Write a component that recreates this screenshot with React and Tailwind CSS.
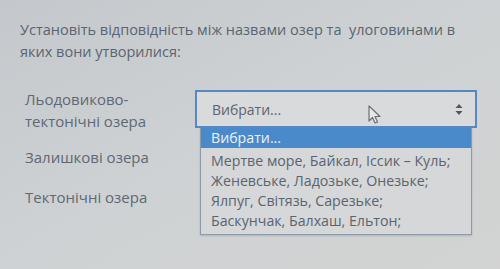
const rows = [
  { label: ['Льодовиково-', 'тектонічні озера'], h: 'h-[58px]' },
  { label: ['Залишкові озера'], h: 'h-[40px]' },
  { label: ['Тектонічні озера'], h: 'h-[40px]' },
];

const options = [
  'Мертве море, Байкал, Іссик – Куль;',
  'Женевське, Ладозьке, Онезьке;',
  'Ялпуг, Світязь, Сарезьке;',
  'Баскунчак, Балхаш, Ельтон;',
];

function Cursor() {
  return (
    <svg width="14" height="20" viewBox="0 0 14 20" className="absolute left-[171px] top-[13px]">
      <path d="M1 1 L1 16 L4.5 12.5 L7 18 L9.5 17 L7 11.5 L12 11.5 Z" fill="#e8e8e8" stroke="#6a6f76" strokeWidth="1.2" strokeLinejoin="round" />
    </svg>
  );
}

function Arrows() {
  return (
    <svg width="8" height="11" viewBox="0 0 8 11" className="ml-auto">
      <path d="M4 0 L7.5 4 L0.5 4 Z M4 11 L7.5 7 L0.5 7 Z" fill="#4f5660" />
    </svg>
  );
}

export default function App() {
  return (
    <div className="w-[500px] h-[269px] overflow-hidden bg-gradient-to-br from-[#c4c8cc] via-[#cfd2d4] to-[#d2d3d2] text-[#5b6470] font-['Open_Sans',sans-serif] relative">
      {/* Question */}
      <div className="pl-[20px] pr-[30px] pt-[19px] text-[14.5px] leading-[22px]">
        Установіть відповідність між назвами озер та&nbsp; улоговинами в яких вони утворилися:
      </div>

      {/* Rows */}
      <div className="mt-[25px] pl-[25px] text-[15px] leading-[22px] text-[#606873]">
        {rows.map((r, i) => (
          <div key={i} className={`${r.h} flex items-start`}>
            <div className="w-[170px]">
              {r.label.map(l => (
                <div key={l}>{l}</div>
              ))}
            </div>
          </div>
        ))}
      </div>

      {/* Select with open list */}
      <div className="absolute left-[195px] top-[90px] w-[282px]">
        <div className="relative h-[38px] border-2 border-[#5688c4] bg-[#d9dadb] flex items-center pl-[15px] pr-[12px] text-[14px]">
          <span>Вибрати...</span>
          <Cursor />
          <Arrows />
        </div>
        <div className="ml-[5px] w-[272px] border border-[#8d9aa8] border-t-0 bg-[#d5d7d8] text-[14.2px] leading-[20px] pb-[3px] shadow-[0_1px_2px_rgba(0,0,0,0.15)]">
          <div className="bg-[#4a8acb] text-[#eef2f6] pl-[10px] h-[20px] leading-[20px]">Вибрати...</div>
          <div className="pt-[3px]">
            {options.map(o => (
              <div key={o} className="pl-[10px] whitespace-nowrap">{o}</div>
            ))}
          </div>
        </div>
      </div>
    </div>
  );
}
